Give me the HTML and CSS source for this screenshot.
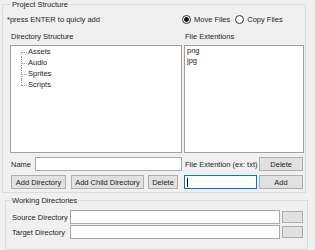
FILE: index.html
```html
<!DOCTYPE html>
<html lang="en">
<head>
    <meta charset="UTF-8">
    <title>Project Setup</title>
    <link rel="stylesheet" href="styles.css">
</head>
<body>
    <fieldset class="group project">
        <legend>Project Structure</legend>
        <div class="top-row">
            <span class="hint">*press ENTER to quicly add</span>
            <label class="radio"><span class="dot checked"></span>Move Files</label>
            <label class="radio"><span class="dot"></span>Copy Files</label>
        </div>
        <div class="panels">
            <div class="col col-left">
                <div class="caption">Directory Structure</div>
                <div class="listbox tree">
                    <ul>
                        <li>Assets</li>
                        <li>Audio</li>
                        <li>Sprites</li>
                        <li>Scripts</li>
                    </ul>
                </div>
                <div class="field-row">
                    <span class="name-label">Name</span>
                    <div class="textbox name-box"></div>
                </div>
                <div class="btn-row">
                    <button class="btn add-dir">Add Directory</button>
                    <button class="btn add-child">Add Child Directory</button>
                    <button class="btn del-dir">Delete</button>
                </div>
            </div>
            <div class="col col-right">
                <div class="caption">File Extentions</div>
                <div class="listbox ext-list">
                    <div>png</div>
                    <div>jpg</div>
                </div>
                <div class="field-row">
                    <span class="ext-label">File Extention (ex: txt)</span>
                    <button class="btn side-btn">Delete</button>
                </div>
                <div class="field-row">
                    <div class="textbox ext-box focused"><span class="caret"></span></div>
                    <button class="btn side-btn">Add</button>
                </div>
            </div>
        </div>
    </fieldset>

    <fieldset class="group working">
        <legend>Working Directories</legend>
        <div class="dir-row">
            <span class="dir-label">Source Directory</span>
            <div class="textbox dir-box"></div>
            <button class="btn browse"></button>
        </div>
        <div class="dir-row">
            <span class="dir-label">Target Directory</span>
            <div class="textbox dir-box"></div>
            <button class="btn browse"></button>
        </div>
    </fieldset>
</body>
</html>
```

FILE: styles.css
```css
html, body {
    margin: 0;
    padding: 0;
    width: 315px;
    height: 250px;
    overflow: hidden;
    background-color: #f0f0f0;
    font-family: 'Liberation Sans', Arial, sans-serif;
    font-size: 7.5px;
    color: #1e1e1e;
}
.group {
    margin: 0;
    border: 1px solid #dcdcdc;
    box-sizing: border-box;
}
.group legend {
    padding: 0 1px;
    line-height: 9px;
}
.project {
    margin-left: 2px;
    width: 304px;
    padding: 4px 1px 3px 4px;
}
.project legend {
    margin-left: 4px;
}
.top-row {
    display: flex;
    align-items: center;
    height: 12px;
}
.hint {
    width: 175px;
}
.radio {
    display: flex;
    align-items: center;
    margin-right: 5px;
}
.dot {
    width: 7px;
    height: 7px;
    border: 1px solid #333;
    border-radius: 50%;
    background: #fff;
    margin-right: 3px;
}
.dot.checked {
    background: radial-gradient(circle, #111 0 2px, #fff 2.6px);
}
.panels {
    display: flex;
    gap: 2px;
    margin-top: 7px;
}
.col {
    display: flex;
    flex-direction: column;
}
.col-left {
    width: 172px;
    margin-left: 3px;
}
.col-right {
    width: 120px;
}
.caption {
    line-height: 9px;
    padding-left: 1px;
    margin-bottom: 4px;
}
.listbox {
    height: 108px;
    background: #fff;
    border: 1px solid #a0a0a0;
    box-sizing: border-box;
}
.tree ul {
    list-style: none;
    margin: 0 0 0 10px;
    padding: 0;
}
.tree li {
    position: relative;
    line-height: 11px;
    padding-left: 7px;
}
.tree li::before {
    content: "";
    position: absolute;
    left: 0;
    top: 0;
    height: 100%;
    border-left: 1px dotted #a0a0a0;
}
.tree li:first-child::before {
    top: 50%;
    height: 50%;
}
.tree li:last-child::before {
    height: 50%;
}
.tree li::after {
    content: "";
    position: absolute;
    left: 0;
    top: 50%;
    width: 6px;
    border-top: 1px dotted #a0a0a0;
}
.ext-list {
    padding-left: 2px;
    line-height: 10px;
}
.field-row {
    display: flex;
    align-items: center;
    height: 14px;
    margin-top: 4px;
}
.name-label {
    width: 25px;
    padding-left: 1px;
    box-sizing: border-box;
}
.textbox {
    height: 14px;
    background: #fff;
    border: 1px solid #a9a9a9;
    box-sizing: border-box;
}
.name-box {
    width: 147px;
}
.ext-label {
    width: 75px;
    padding-left: 1px;
}
.ext-box {
    width: 73px;
    margin-right: 2px;
}
.textbox.focused {
    border-color: #0078d7;
    display: flex;
    align-items: center;
    padding-left: 2px;
}
.caret {
    width: 1px;
    height: 9px;
    background: #000;
}
.btn {
    height: 14px;
    padding: 0;
    margin: 0;
    background: #e1e1e1;
    border: 1px solid #adadad;
    box-sizing: border-box;
    font-family: inherit;
    font-size: 7.5px;
    color: #1e1e1e;
}
.side-btn {
    width: 44px;
    margin-left: auto;
    margin-right: 1px;
}
.btn-row {
    display: flex;
    align-items: center;
    margin-top: 4px;
    padding-left: 1px;
}
.add-dir {
    width: 55px;
}
.add-child {
    width: 73px;
    margin-left: 5px;
}
.del-dir {
    width: 30px;
    margin-left: 4px;
}
.working {
    margin: 3px 0 0 5px;
    width: 303px;
    padding: 5px 4px 10px 5px;
}
.working legend {
    margin-left: 0;
}
.dir-row {
    display: flex;
    align-items: center;
    height: 14px;
}
.dir-row + .dir-row {
    margin-top: 1px;
}
.dir-label {
    width: 59px;
    padding-left: 1px;
    box-sizing: border-box;
}
.dir-box {
    width: 210px;
}
.browse {
    width: 21px;
    height: 12px;
    margin-left: 2px;
}
```
